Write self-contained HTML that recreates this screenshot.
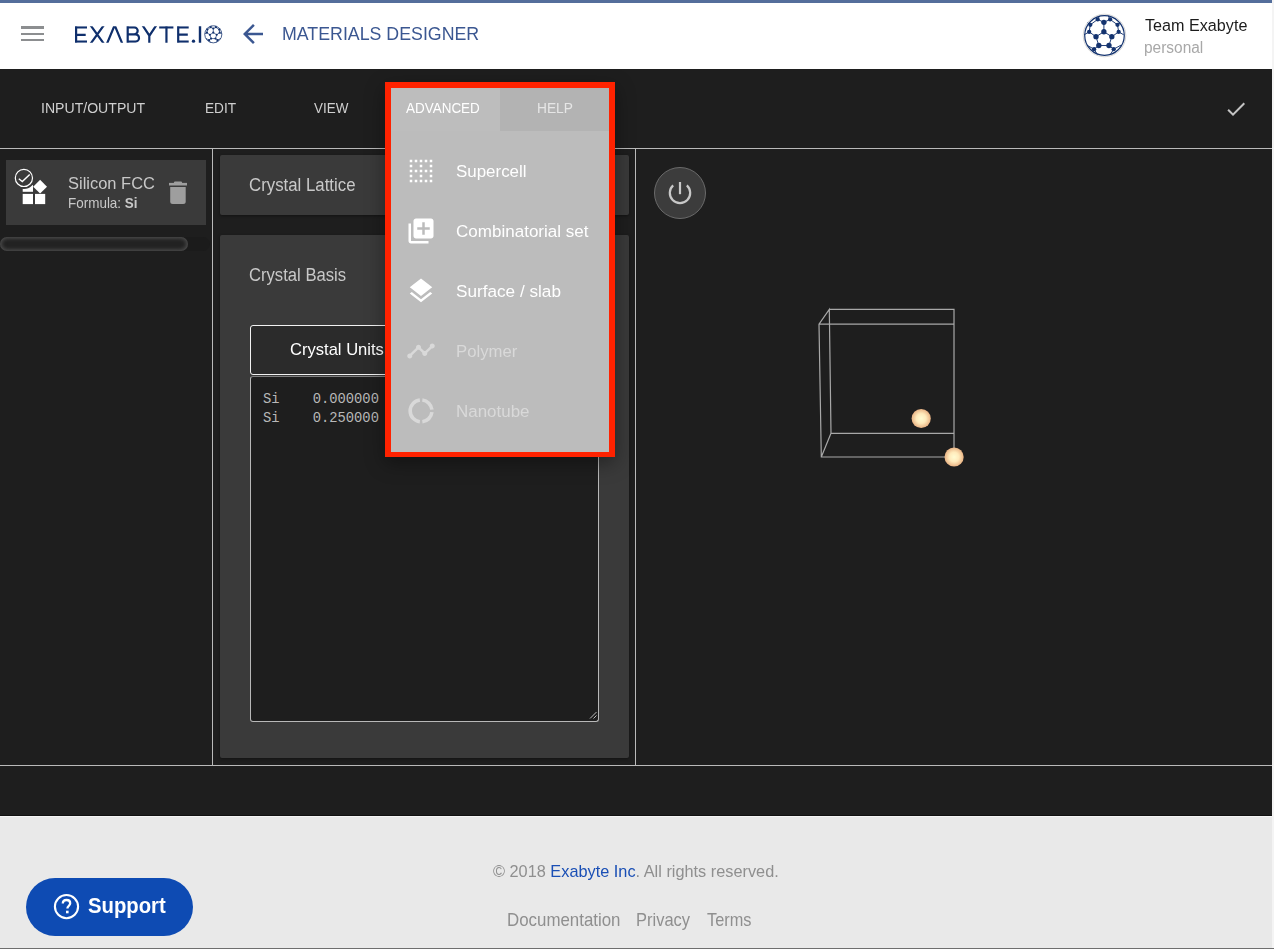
<!DOCTYPE html>
<html><head><meta charset="utf-8">
<style>
*{margin:0;padding:0;box-sizing:border-box}
html,body{width:1274px;height:949px;overflow:hidden;background:#1e1e1e;font-family:"Liberation Sans",sans-serif}
.a{position:absolute}
.t{position:absolute;white-space:nowrap;line-height:1;transform-origin:0 0}
svg{position:absolute;overflow:visible}
</style></head><body>
<!-- backgrounds -->
<div class="a" style="left:0;top:0;width:1272px;height:3px;background:#546e9b"></div>
<div class="a" style="left:0;top:3px;width:1272px;height:66px;background:#fff"></div>
<div class="a" style="left:0;top:69px;width:1272px;height:79px;background:#1e1e1e"></div>
<div class="a" style="left:0;top:148px;width:1272px;height:1px;background:#bababa"></div>
<div class="a" style="left:0;top:149px;width:1272px;height:616px;background:#1e1e1e"></div>
<div class="a" style="left:212px;top:149px;width:1px;height:616px;background:#bababa"></div>
<div class="a" style="left:635px;top:149px;width:1px;height:616px;background:#bababa"></div>
<div class="a" style="left:0;top:765px;width:1272px;height:1px;background:#bababa"></div>
<div class="a" style="left:0;top:766px;width:1272px;height:49px;background:#1e1e1e"></div>
<div class="a" style="left:0;top:816px;width:1272px;height:132px;background:#e9e9e9;border-top:1px solid #f6f6f6"></div>
<div class="a" style="left:0;top:815px;width:1272px;height:1px;background:#111"></div>
<div class="a" style="left:0;top:948px;width:1274px;height:1px;background:#6e6e6e"></div>
<div class="a" style="left:1272px;top:0;width:2px;height:948px;background:#f4f4f4"></div>

<!-- header -->
<div class="a" style="left:21px;top:26px;width:23px;height:3px;background:#8c8e90"></div>
<div class="a" style="left:21px;top:33px;width:23px;height:2px;background:#8c8e90"></div>
<div class="a" style="left:21px;top:39px;width:23px;height:2px;background:#8c8e90"></div>

<svg style="left:70px;top:20px" width="160" height="30" viewBox="0 0 160 30">
<defs><clipPath id="lc"><rect x="0" y="6.3" width="160" height="16.35"/></clipPath></defs>
<g fill="none" stroke="#0f2f6c" stroke-width="2.2" stroke-linecap="butt" stroke-linejoin="miter" clip-path="url(#lc)">
<path d="M17 7.4H6.1V21.55H17M6.1 14.8H15.7M6.1 4V25"/>
<path d="M19.86 4.3L34.54 24.7M34.54 4.3L19.86 24.7"/>
<path d="M36.56 24.7L44.65 5.2L52.74 24.7"/>
<path d="M57.7 4V25M57.7 7.4H64.25A3.45 3.45 0 0 1 64.25 14.3H57.7M57.7 14.3H65.4A3.6 3.6 0 0 1 65.4 21.55H57.7"/>
<path d="M71.86 4.3L79.4 15.7L86.94 4.3M79.3 15.5V25"/>
<path d="M89.2 7.4H103.4M96.45 6V25"/>
<path d="M118.7 7.4H108.2V21.55H118.7M108.2 14.6H117.8M108.2 4V25"/>
<path d="M130 4V25" stroke-width="2.4"/>
</g>
<circle cx="123.5" cy="21.2" r="1.65" fill="#0f2f6c"/>
</svg>
<svg style="left:204.3px;top:24.9px" width="18.6" height="18.6" viewBox="0 0 100 100" fill="#14336f" stroke="#14336f"><circle cx="50" cy="50" r="46" fill="none" stroke-width="4.2"/><path d="M50.0 41.0L50.0 19.0M50.0 41.0L31.6 52.5M50.0 41.0L68.4 52.5M31.6 52.5L38.2 73.0M68.4 52.5L61.8 73.0M38.2 73.0L61.8 73.0M50.0 19.0L35.5 12.3M50.0 19.0L64.5 12.3M35.5 12.3L18.4 24.8M64.5 12.3L81.6 24.8M18.4 24.8L15.7 41.3M81.6 24.8L84.3 41.3M15.7 41.3L31.6 52.5M84.3 41.3L68.4 52.5M38.2 73.0L27.2 81.5M61.8 73.0L72.8 81.5M35.5 12.3L40.0 4.0M64.5 12.3L60.0 4.0M15.7 41.3L4.0 48.0M84.3 41.3L96.0 48.0M27.2 81.5L35.0 94.0M72.8 81.5L65.0 94.0M18.4 24.8L12.0 20.0M81.6 24.8L88.0 20.0M27.2 81.5L10.0 72.0M72.8 81.5L90.0 72.0" fill="none" stroke-width="3.6"/><g stroke="none"><circle cx="50.0" cy="41.0" r="5.8"/><circle cx="50.0" cy="19.0" r="5.8"/><circle cx="31.6" cy="52.5" r="5.8"/><circle cx="68.4" cy="52.5" r="5.8"/><circle cx="38.2" cy="73.0" r="5.8"/><circle cx="61.8" cy="73.0" r="5.8"/><circle cx="35.5" cy="12.3" r="5.8"/><circle cx="64.5" cy="12.3" r="5.8"/><circle cx="18.4" cy="24.8" r="5.8"/><circle cx="81.6" cy="24.8" r="5.8"/><circle cx="15.7" cy="41.3" r="5.8"/><circle cx="84.3" cy="41.3" r="5.8"/><circle cx="27.2" cy="81.5" r="5.8"/><circle cx="72.8" cy="81.5" r="5.8"/></g></svg>

<svg style="left:238px;top:19px" width="30" height="30" viewBox="0 0 24 24"><path fill="#3b5791" d="M20 11H7.83l5.59-5.59L12 4l-8 8 8 8 1.41-1.41L7.83 13H20v-2z"/></svg>
<div class="t" style="left:281.56px;top:24px;font-size:19.0px;transform:scaleX(0.9354);color:#3b5791">MATERIALS DESIGNER</div>

<svg style="left:1082.5px;top:14.3px" width="43" height="43" viewBox="0 0 100 100" fill="#14336f" stroke="#14336f"><circle cx="50" cy="50" r="49.5" fill="#fff" stroke="#cfcfcf" stroke-width="2"/><circle cx="50" cy="50" r="46" fill="none" stroke-width="2.8"/><path d="M48.6 41.3L48.6 19.3M48.6 41.3L30.2 52.8M48.6 41.3L67.0 52.8M30.2 52.8L36.8 73.3M67.0 52.8L60.4 73.3M36.8 73.3L60.4 73.3M48.6 19.3L34.1 12.6M48.6 19.3L63.1 12.6M34.1 12.6L17.0 25.1M63.1 12.6L80.2 25.1M17.0 25.1L14.3 41.6M80.2 25.1L82.9 41.6M14.3 41.6L30.2 52.8M82.9 41.6L67.0 52.8M36.8 73.3L25.8 81.8M60.4 73.3L71.4 81.8M34.1 12.6L38.6 4.3M63.1 12.6L58.6 4.3M14.3 41.6L2.6 48.3M82.9 41.6L94.6 48.3M25.8 81.8L33.6 94.3M71.4 81.8L63.6 94.3M17.0 25.1L10.6 20.3M80.2 25.1L86.6 20.3M25.8 81.8L8.6 72.3M71.4 81.8L88.6 72.3" fill="none" stroke-width="2.2"/><g stroke="none"><circle cx="48.6" cy="41.3" r="6.2"/><circle cx="48.6" cy="19.3" r="6.2"/><circle cx="30.2" cy="52.8" r="6.2"/><circle cx="67.0" cy="52.8" r="6.2"/><circle cx="36.8" cy="73.3" r="6.2"/><circle cx="60.4" cy="73.3" r="6.2"/><circle cx="34.1" cy="12.6" r="5.0"/><circle cx="63.1" cy="12.6" r="5.0"/><circle cx="17.0" cy="25.1" r="5.0"/><circle cx="80.2" cy="25.1" r="5.0"/><circle cx="14.3" cy="41.6" r="5.0"/><circle cx="82.9" cy="41.6" r="5.0"/><circle cx="25.8" cy="81.8" r="5.0"/><circle cx="71.4" cy="81.8" r="5.0"/></g></svg>
<div class="t" style="left:1144.5px;top:17px;font-size:17.1px;transform:scaleX(0.9454);color:#1c1c1c">Team Exabyte</div>
<div class="t" style="left:1143.71px;top:40px;font-size:15.6px;transform:scaleX(0.9914);color:#a8a8a8">personal</div>

<!-- nav -->
<div class="t" style="left:40.98px;top:100px;font-size:15.4px;transform:scaleX(0.915);color:#cfcfcf">INPUT/OUTPUT</div>
<div class="t" style="left:204.51px;top:100px;font-size:15.4px;transform:scaleX(0.8853);color:#cfcfcf">EDIT</div>
<div class="t" style="left:313.5px;top:100px;font-size:15.4px;transform:scaleX(0.8718);color:#cfcfcf">VIEW</div>
<svg style="left:1224px;top:96.6px" width="24" height="24" viewBox="0 0 24 24"><path fill="#c4c4c4" d="M9 16.17L4.83 12l-1.42 1.41L9 19 21 7l-1.41-1.41z"/></svg>

<!-- left panel -->
<div class="a" style="left:6px;top:160px;width:200px;height:65px;background:#3a3a3a"></div>
<svg style="left:14px;top:166px" width="36" height="40" viewBox="0 0 36 40">
<rect x="8.7" y="27.9" width="10.3" height="10.2" fill="#fff"/>
<rect x="21" y="27.9" width="10.2" height="10.2" fill="#fff"/>
<rect x="8.7" y="15.6" width="10.3" height="10.2" fill="#fff"/>
<path d="M26.1 13.8L33 20.7L26.1 27.6L19.2 20.7Z" fill="#fff"/>
<circle cx="9.9" cy="11.9" r="11.2" fill="#3a3a3a"/>
<circle cx="9.9" cy="11.9" r="8.6" fill="none" stroke="#fff" stroke-width="1.2"/>
<path d="M4.8 12.8L8.3 15.6L15.7 8.4" fill="none" stroke="#fff" stroke-width="1.4"/>
</svg>
<div class="t" style="left:68.43px;top:176px;font-size:16.9px;transform:scaleX(0.9747);color:#c8c8c8">Silicon FCC</div>
<div class="t" style="left:68.45px;top:196px;font-size:14.2px;transform:scaleX(0.9486);color:#c8c8c8">Formula: <b>Si</b></div>
<svg style="left:166px;top:179px" width="24" height="28" viewBox="0 0 24 28">
<rect x="3" y="3.9" width="18" height="2.6" fill="#9e9e9e"/>
<rect x="7.9" y="2.5" width="8.2" height="2.6" rx="1.2" fill="#9e9e9e"/>
<path d="M4.2 7.9H19.7V22.6A2.5 2.5 0 0 1 17.2 25.1H6.7A2.5 2.5 0 0 1 4.2 22.6Z" fill="#9e9e9e"/>
</svg>
<div class="a" style="left:0;top:237px;width:210px;height:14px;border-radius:7px;background:#1b1b1b"></div>
<div class="a" style="left:0;top:237px;width:188px;height:14px;border-radius:7px;background:#222;box-shadow:inset 0 0 4px 1px #555"></div>

<!-- middle -->
<div class="a" style="left:220px;top:155px;width:409px;height:60px;background:#3a3a3a;border-radius:2px;box-shadow:0 1px 3px rgba(0,0,0,.4)"></div>
<div class="t" style="left:248.64px;top:177px;font-size:17.6px;transform:scaleX(0.9555);color:#c8c8c8">Crystal Lattice</div>
<div class="a" style="left:220px;top:235px;width:409px;height:523px;background:#3a3a3a;border-radius:2px;box-shadow:0 1px 3px rgba(0,0,0,.4)"></div>
<div class="t" style="left:248.65px;top:267px;font-size:17.6px;transform:scaleX(0.9455);color:#c8c8c8">Crystal Basis</div>
<div class="a" style="left:250px;top:325px;width:175px;height:50px;background:#2b2b2b;border:1.2px solid #f2f2f2;border-radius:3px"></div>
<div class="t" style="left:289.59px;top:341px;font-size:16.4px;transform:scaleX(1.0109);color:#fff">Crystal Units</div>
<div class="a" style="left:250px;top:376px;width:349px;height:346px;background:#1e1e1e;border:1px solid #b8b8b8;border-top-color:#808080;border-radius:3px"></div>
<div class="t" style="left:263px;top:390px;font-size:13.8px;line-height:19px;color:#b8b8b8;font-family:'Liberation Mono',monospace;white-space:pre">Si    0.000000
Si    0.250000</div>
<svg style="left:588px;top:710px" width="10" height="10" viewBox="0 0 10 10"><path d="M2 8.5L8.5 2M5.5 8.5L8.5 5.5" stroke="#bbb" stroke-width="1"/></svg>

<!-- viewer -->
<div class="a" style="left:654px;top:167px;width:52px;height:52px;border-radius:50%;background:#3c3c3c;border:1px solid #6a6a6a"></div>
<svg style="left:666px;top:179px" width="28" height="28" viewBox="0 0 28 28">
<path d="M7.17 6.32A10.2 10.2 0 1 0 20.83 6.32" fill="none" stroke="#c8c8c8" stroke-width="2.2"/>
<path d="M14 3V15.2" stroke="#c8c8c8" stroke-width="2.2"/>
</svg>
<svg style="left:0;top:0" width="1274" height="949">
<g fill="none" stroke="#a8a8a8" stroke-width="1.2">
<path d="M829.3 309.3H954V457H821.3L819 324.2L829.3 309.3L831 433.3H954M819 324.2H954M821.3 457L831 433.3"/>
</g>
<defs><radialGradient id="sp" cx="0.5" cy="0.5" r="0.5"><stop offset="0" stop-color="#fffbd2"/><stop offset="0.5" stop-color="#ffeabb"/><stop offset="1" stop-color="#e9b283"/></radialGradient><filter id="bl" x="-20%" y="-20%" width="140%" height="140%"><feGaussianBlur stdDeviation="0.7"/></filter></defs>
<circle cx="921.2" cy="418.5" r="9.6" fill="url(#sp)" filter="url(#bl)"/>
<circle cx="954.1" cy="457" r="9.6" fill="url(#sp)" filter="url(#bl)"/>
</svg>

<!-- dropdown -->
<div class="a" style="left:385px;top:82px;width:230px;height:375px;background:#bcbcbc;border:6px solid #ff2200;border-bottom-width:5.5px;box-shadow:0 6px 18px rgba(0,0,0,.38)"></div>
<div class="a" style="left:391px;top:88px;width:109px;height:43px;background:#bdbdbd"></div>
<div class="a" style="left:500px;top:88px;width:109px;height:43px;background:#b3b3b3"></div>
<div class="t" style="left:405.9px;top:100px;font-size:15.4px;transform:scaleX(0.875);color:#fff">ADVANCED</div>
<div class="t" style="left:536.71px;top:100px;font-size:15.4px;transform:scaleX(0.8923);color:#e6e6e6">HELP</div>

<svg style="left:406px;top:156px" width="30" height="30" viewBox="0 0 24 24"><path fill="#fff" d="M7 5h2V3H7v2zm0 8h2v-2H7v2zm0 8h2v-2H7v2zm4-4h2v-2h-2v2zm0 4h2v-2h-2v2zm-8 0h2v-2H3v2zm0-4h2v-2H3v2zm0-4h2v-2H3v2zm0-4h2V7H3v2zm0-4h2V3H3v2zm8 8h2v-2h-2v2zm8 4h2v-2h-2v2zm0-4h2v-2h-2v2zm0 8h2v-2h-2v2zm0-12h2V7h-2v2zm-8 0h2V7h-2v2zm8-6v2h2V3h-2zm-8 2h2V3h-2v2zm4 16h2v-2h-2v2zm0-8h2v-2h-2v2zm0-8h2V3h-2v2z"/></svg>
<div class="t" style="left:455.51px;top:163px;font-size:17.1px;transform:scaleX(0.9899);color:#fff">Supercell</div>

<svg style="left:406px;top:216px" width="30" height="30" viewBox="0 0 24 24"><path fill="#fff" d="M4 6H2v14c0 1.1.9 2 2 2h14v-2H4V6zm16-4H8c-1.1 0-2 .9-2 2v12c0 1.1.9 2 2 2h12c1.1 0 2-.9 2-2V4c0-1.1-.9-2-2-2zm-1 9h-4v4h-2v-4H9V9h4V5h2v4h4v2z"/></svg>
<div class="t" style="left:455.5px;top:223px;font-size:17.1px;transform:scaleX(0.9962);color:#fff">Combinatorial set</div>

<svg style="left:406px;top:276px" width="30" height="30" viewBox="0 0 24 24"><path fill="#fff" d="M11.99 18.54l-7.37-5.73L3 14.07l9 7 9-7-1.63-1.27-7.38 5.74zM12 16l7.36-5.73L21 9l-9-7-9 7 1.63 1.27L12 16z"/></svg>
<div class="t" style="left:455.8px;top:283px;font-size:17.1px;transform:scaleX(1.0039);color:#fff">Surface / slab</div>

<svg style="left:406px;top:336px" width="30" height="30" viewBox="0 0 24 24"><path fill="#d9d9d9" d="M23 8c0 1.1-.9 2-2 2-.18 0-.35-.02-.51-.07l-3.56 3.55c.05.16.07.34.07.52 0 1.1-.9 2-2 2s-2-.9-2-2c0-.18.02-.36.07-.52l-2.550-2.55c-.16.05-.34.07-.52.07s-.36-.02-.52-.07l-4.55 4.56c.05.16.07.33.07.51 0 1.1-.9 2-2 2s-2-.9-2-2 .9-2 2-2c.18 0 .35.02.51.07l4.56-4.55C8.02 9.36 8 9.18 8 9c0-1.1.9-2 2-2s2 .9 2 2c0 .18-.02.36-.07.52l2.55 2.55c.16-.05.34-.07.52-.07s.36.02.52.07l3.55-3.56C19.020 8.35 19 8.18 19 8c0-1.1.9-2 2-2s2 .9 2 2z"/></svg>
<div class="t" style="left:455.92px;top:343px;font-size:17.1px;transform:scaleX(0.9774);color:#d9d9d9">Polymer</div>

<svg style="left:406px;top:396px" width="30" height="30" viewBox="0 0 30 30"><path fill="none" stroke="#d9d9d9" stroke-width="3.6" d="M16.35 4.07A10.9 10.9 0 0 1 25.93 13.65M25.93 16.15A10.9 10.9 0 0 1 16.35 25.73M13.85 25.73A10.9 10.9 0 0 1 13.85 4.07"/></svg>
<div class="t" style="left:455.91px;top:403px;font-size:17.1px;transform:scaleX(0.9918);color:#d9d9d9">Nanotube</div>

<!-- footer -->
<div class="t" style="left:493.2px;top:863px;font-size:17.0px;transform:scaleX(0.9593);color:#8f8f8f">© 2018 <span style="color:#1a4fb5">Exabyte Inc</span>. All rights reserved.</div>
<div class="t" style="left:506.85px;top:912px;font-size:17.7px;transform:scaleX(0.9538);color:#8f8f8f">Documentation</div>
<div class="t" style="left:635.77px;top:912px;font-size:17.7px;transform:scaleX(0.9316);color:#8f8f8f">Privacy</div>
<div class="t" style="left:707.1px;top:912px;font-size:17.7px;transform:scaleX(0.9229);color:#8f8f8f">Terms</div>
<div class="a" style="left:26px;top:878px;width:167px;height:58px;border-radius:29px;background:#0e4bb3"></div>
<svg style="left:53px;top:893px" width="27" height="27" viewBox="0 0 27 27"><circle cx="13.5" cy="13.6" r="11.6" fill="none" stroke="#fff" stroke-width="2.1"/><path d="M9.8 10.6C9.8 8.3 11.4 7 13.5 7C15.6 7 17.2 8.3 17.2 10.3C17.2 12.6 14.4 12.9 14.4 15.6" fill="none" stroke="#fff" stroke-width="2.3"/><rect x="13" y="17.7" width="2.6" height="2.6" fill="#fff"/></svg>
<div class="t" style="left:87.86px;top:896px;font-size:21.5px;transform:scaleX(0.9432);font-weight:bold;color:#fff">Support</div>
</body></html>
